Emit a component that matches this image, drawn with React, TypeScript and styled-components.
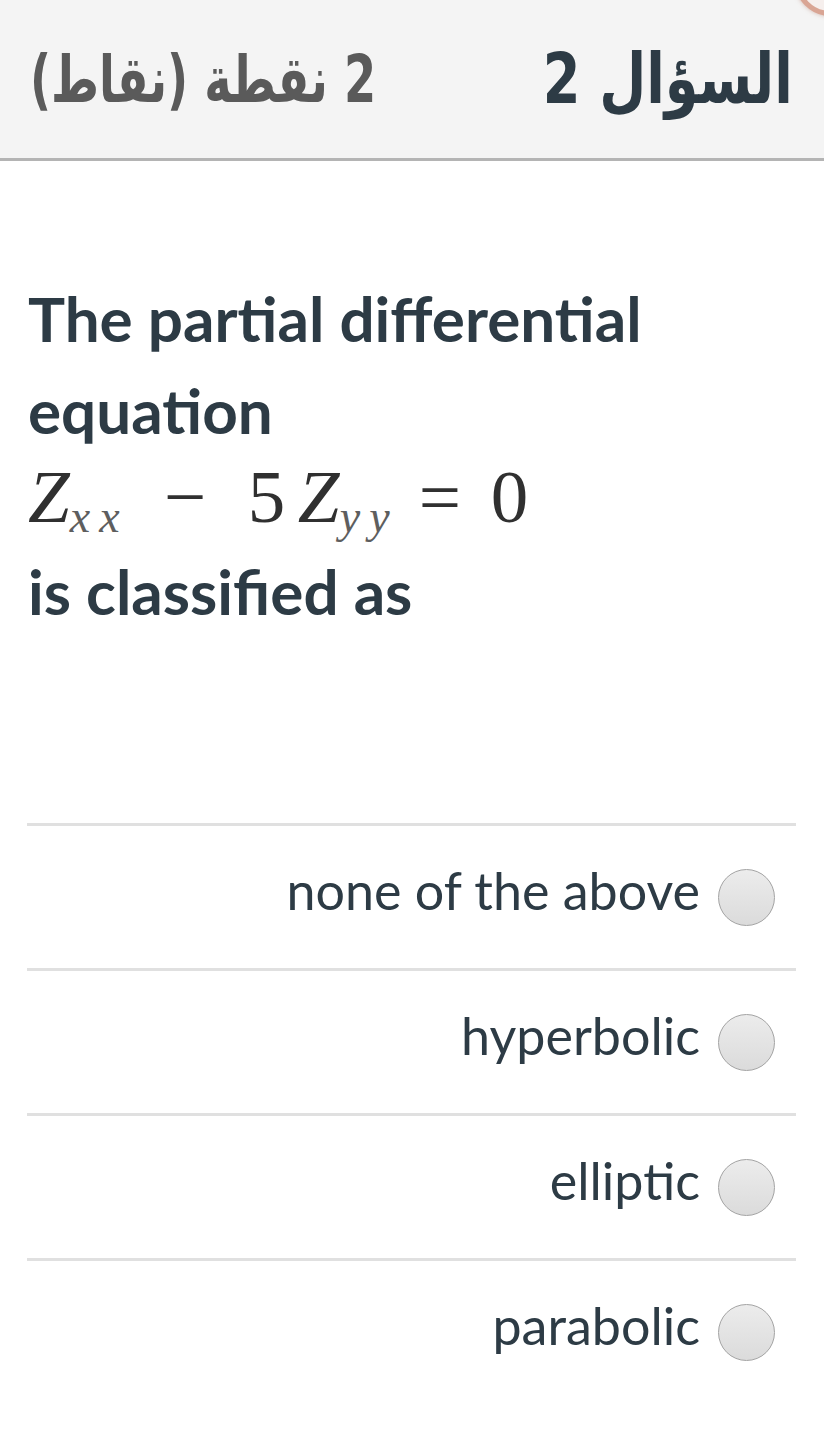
import React from "react";
import styled, { createGlobalStyle } from "styled-components";

const Global = createGlobalStyle`
  html, body { margin: 0; padding: 0; background: #ffffff; }
  body { font-family: Lato, "Noto Sans", sans-serif; color: #2d3b45; }
`;

const Page = styled.div`
  width: 824px;
  min-height: 1429px;
  background: #ffffff;
  position: relative;
  overflow: hidden;
`;

const Header = styled.header`
  position: relative;
  height: 158px;
  background: #f4f4f4;
  border-bottom: 3px solid #b4b4b4;
  direction: rtl;
  display: flex;
  align-items: center;
  justify-content: space-between;
  padding: 0 31px 0 30px;
  box-sizing: content-box;
`;

const CornerWrap = styled.div`
  position: absolute;
  top: 0;
  right: 0;
  width: 40px;
  height: 30px;
  overflow: hidden;
  direction: ltr;
`;

const CornerMark = styled.div`
  position: absolute;
  top: -58px;
  left: 10px;
  width: 64px;
  height: 64px;
  border-radius: 50%;
  border: 5px solid #d9a594;
  background: #f6efed;
  box-shadow: 0 0 4px rgba(180, 120, 100, 0.5);
`;

const Title = styled.h1<{ $muted?: boolean }>`
  margin: 0;
  font-family: "DejaVu Sans Condensed", "DejaVu Sans", sans-serif;
  font-weight: bold;
  font-size: ${(p) => (p.$muted ? "65px" : "70px")};
  color: ${(p) => (p.$muted ? "#5a5a5a" : "#2d3b45")};
  line-height: 1;
  white-space: nowrap;
  transform: scaleX(${(p) => (p.$muted ? 0.79 : 0.86)});
  transform-origin: ${(p) => (p.$muted ? "left center" : "right center")};
`;

const Question = styled.section`
  padding: 111px 28px 0 28px;
  font-family: Lato, sans-serif;
  font-weight: bold;
  font-size: 62px;
  line-height: 92px;
  color: #2d3b45;
`;

const Line = styled.div``;

const Formula = styled.div`
  font-family: "Liberation Serif", "DejaVu Serif", serif;
  font-weight: normal;
  font-size: 75px;
  line-height: 82px;
  height: 89px;
  color: #303030;
  display: flex;
  align-items: baseline;
`;

const Glyph = styled.span<{ $w: number; $italic?: boolean }>`
  flex: 0 0 ${(p) => p.$w}px;
  font-style: ${(p) => (p.$italic ? "italic" : "normal")};
  white-space: nowrap;
`;

const Sub = styled.span<{ $w: number }>`
  flex: 0 0 ${(p) => p.$w}px;
  font-style: italic;
  font-size: 46px;
  letter-spacing: 9px;
  position: relative;
  top: 10px;
  color: #5e5e5e;
  white-space: nowrap;
`;

const Answers = styled.ul`
  list-style: none;
  margin: 186px 28px 0 27px;
  padding: 0;
`;

const Answer = styled.li`
  border-top: 3px solid #e0e0e0;
  height: 142px;
  display: flex;
  align-items: center;
  justify-content: flex-end;
  padding-right: 21px;
  gap: 18px;
`;

const AnswerText = styled.span`
  font-family: Lato, sans-serif;
  font-size: 52px;
  color: #2d3b45;
  padding-bottom: 14px;
`;

const Radio = styled.span`
  width: 55px;
  height: 55px;
  border-radius: 50%;
  border: 1.5px solid #a3a3a3;
  background: linear-gradient(#ececec, #dbdbdb);
  flex-shrink: 0;
`;

const options = ["none of the above", "hyperbolic", "elliptic", "parabolic"];

export default function App() {
  return (
    <Page>
      <Global />
      <Header>
        <Title>السؤال 2</Title>
        <Title $muted>2 نقطة (نقاط)</Title>
        <CornerWrap>
          <CornerMark />
        </CornerWrap>
      </Header>
      <Question>
        <Line>The partial differential</Line>
        <Line>equation</Line>
        <Formula aria-label="Z_xx − 5 Z_yy = 0">
          <Glyph $w={41} $italic>Z</Glyph>
          <Sub $w={94}>xx</Sub>
          <Glyph $w={84}>−</Glyph>
          <Glyph $w={50}>5</Glyph>
          <Glyph $w={42} $italic>Z</Glyph>
          <Sub $w={79}>yy</Sub>
          <Glyph $w={72}>=</Glyph>
          <Glyph $w={40}>0</Glyph>
        </Formula>
        <Line>is classified as</Line>
      </Question>
      <Answers>
        {options.map((o) => (
          <Answer key={o}>
            <AnswerText>{o}</AnswerText>
            <Radio />
          </Answer>
        ))}
      </Answers>
    </Page>
  );
}
